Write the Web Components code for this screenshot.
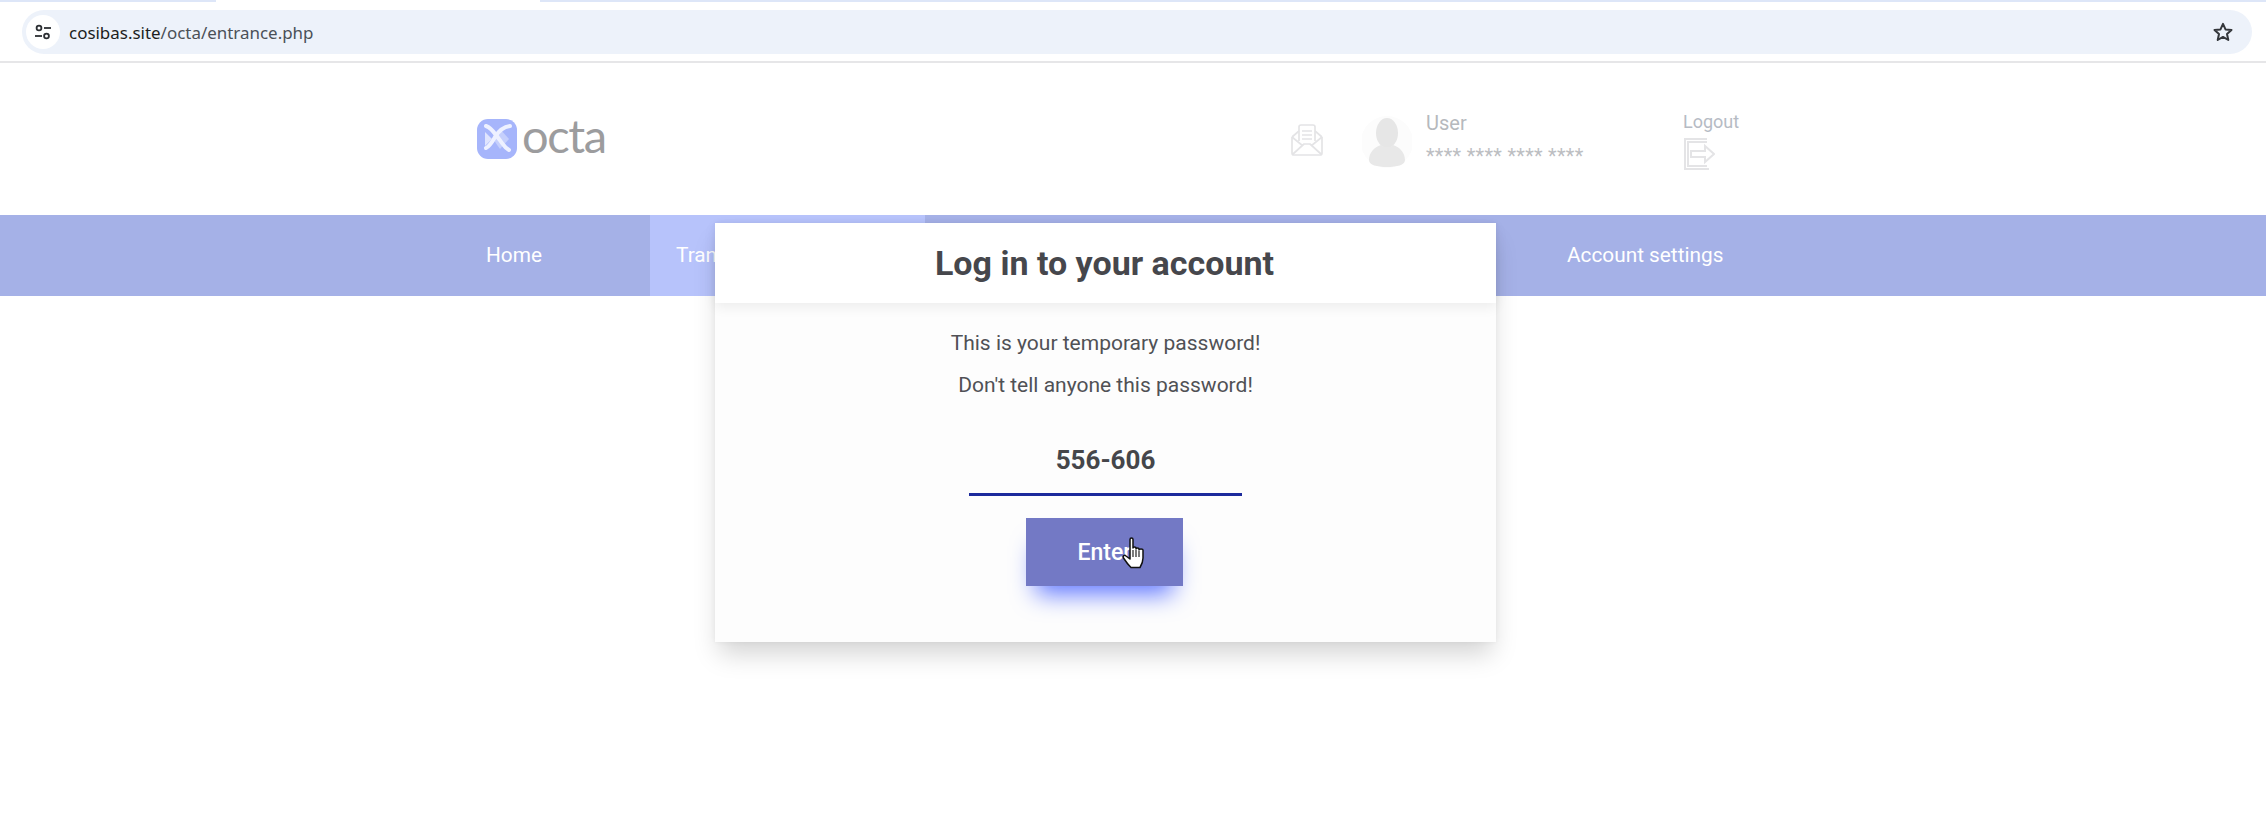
<!DOCTYPE html>
<html>
<head>
<meta charset="utf-8">
<title>octa</title>
<style>
  html, body { margin: 0; padding: 0; background: #fff; }
  body { width: 2266px; height: 838px; overflow: hidden; position: relative; font-family: Roboto, "Liberation Sans", sans-serif; }
</style>
</head>
<body>
<browser-bar url-host="cosibas.site" url-path="/octa/entrance.php"></browser-bar>
<site-header></site-header>
<site-nav></site-nav>
<login-modal code="556-606"></login-modal>
<script>
class BrowserBar extends HTMLElement {
  constructor() {
    super();
    this.attachShadow({ mode: 'open' });
  }
  connectedCallback() {
    this.shadowRoot.innerHTML = `
    <style>
      :host { display: block; height: 63px; box-sizing: border-box; border-bottom: 2px solid #e6e6e8; background: #fff; }
      .tabs { display: flex; height: 2px; }
      .tabs i { display: block; height: 2px; background: #dde6f8; }
      .tabs .a { width: 216px; }
      .tabs .b { width: 324px; background: #fff; }
      .tabs .c { flex: 1; }
      .row { padding: 8px 14px 0 22px; }
      .bar { height: 44px; border-radius: 22px; background: #edf2fa; display: flex; align-items: center; padding: 0 18px 0 3px; }
      .tune { width: 34px; height: 34px; border-radius: 50%; background: #fff; display: flex; align-items: center; justify-content: center; margin-left: 1px; }
      .url { margin-left: 9px; font: 16.950px "Noto Sans", "Open Sans", sans-serif; color: #4a5057; }
      .url b { font-weight: 400; color: #1c1e21; }
      .star { margin-left: auto; display: block; }
    </style>
    <div class="tabs"><i class="a"></i><i class="b"></i><i class="c"></i></div>
    <div class="row">
      <div class="bar">
        <div class="tune">
          <svg width="20" height="20" viewBox="0 0 20 20" fill="none" stroke="#2c2f33" stroke-width="1.8">
            <circle cx="6" cy="6" r="2.4"/><path d="M11 6h7"/>
            <circle cx="13.5" cy="14" r="2.4"/><path d="M2 14h7"/>
          </svg>
        </div>
        <span class="url"><b>${this.getAttribute('url-host')}</b>${this.getAttribute('url-path')}</span>
        <svg class="star" width="22" height="22" viewBox="0 0 22 22" fill="none" stroke="#34373b" stroke-width="2" stroke-linejoin="round">
          <path d="M11 2.8l2.5 5.6 6 .6-4.5 4 1.3 6L11 15.9 5.700 19l1.300-6-4.500-4 6-.6z"/>
        </svg>
      </div>
    </div>`;
  }
}
customElements.define('browser-bar', BrowserBar);

class SiteHeader extends HTMLElement {
  constructor() {
    super();
    this.attachShadow({ mode: 'open' });
    this.shadowRoot.innerHTML = `
    <style>
      :host { display: flex; height: 152px; align-items: center; box-sizing: border-box; padding-left: 477px; color: #b4b6b9; font-family: Roboto, "Liberation Sans", sans-serif; }
      .logo { display: flex; align-items: center; gap: 5px; width: 813px; }
      .word { font: 400 47px/40px Lato, "Noto Sans", sans-serif; letter-spacing: -1.4px; color: #9c9c9e; margin-top: -8px; }
      .mail { width: 34px; height: 34px; display: block; margin-right: 38px; margin-top: 2px; }
      .avatar { width: 50px; height: 56px; display: block; margin-right: 14px; margin-top: 4px; }
      .user { width: 257px; }
      .name { font-size: 20px; line-height: 24px; color: #b6b9bd; }
      .mask { font-size: 19.900px; line-height: 20px; margin-top: 12px; color: #bcbec2; letter-spacing: .3px; }
      .out-label { font-size: 18px; line-height: 22px; color: #b6bbc4; }
      .out svg { display: block; margin-top: 4px; }
      .out { margin-top: 4px; }
    </style>
    <div class="logo">
      <svg width="40" height="40" viewBox="0 0 40 40">
        <rect x="0" y="0" width="40" height="40" rx="11" fill="#a6b5fb"/>
        <path d="M23 10l9 10-9 10-7-10z" fill="#c5cffc"/>
        <path d="M8 13l7 7-7 7z" fill="#dfe4fe"/>
        <path d="M9 7c6 2 9 8 13 13s5 8 10 11" fill="none" stroke="#eef1ff" stroke-width="4" stroke-linecap="round"/>
        <path d="M33 7c-7 1-12 6-15 11s-5 9-9 11" fill="none" stroke="#eef1ff" stroke-width="4" stroke-linecap="round"/>
      </svg>
      <span class="word">octa</span>
    </div>
    <svg class="mail" viewBox="0 0 34 34" fill="none" stroke="#e4e4e6" stroke-width="1.700" stroke-linejoin="round">
      <path d="M2 14l7-6M32 14l-7-6M2 14v16a2 2 0 0 0 2 2h26a2 2 0 0 0 2-2V14"/>
      <path d="M9 18V4a2 2 0 0 1 2-2h12a2 2 0 0 1 2 2v14"/>
      <path d="M2 14l11 9M32 14l-11 9M3 31l11-10h6l11 10"/>
      <path d="M12 8h10M12 12h10M12 16h10"/>
    </svg>
    <svg class="avatar" viewBox="0 0 50 56">
      <circle cx="25" cy="29" r="26" fill="#fcfcfc"/>
      <ellipse cx="25" cy="20" rx="11" ry="15" fill="#e6e6e6"/>
      <path d="M19 32c-7 2-12 8-12 15 0 5 8 7 18 7s18-2 18-7c0-7-5-13-12-15-3 3-9 3-12 0z" fill="#e8e8e8"/>
    </svg>
    <div class="user">
      <div class="name">User</div>
      <div class="mask">**** **** **** ****</div>
    </div>
    <div class="out">
      <div class="out-label">Logout</div>
      <svg width="32" height="34" viewBox="0 0 32 34" fill="none" stroke="#e4e4e6" stroke-width="2">
        <path d="M24 2H2v30h24M24 5H5v24h19"/>
        <path d="M8 14h14V9l9 8-9 8v-5H8z"/>
      </svg>
    </div>`;
  }
}
customElements.define('site-header', SiteHeader);

class SiteNav extends HTMLElement {
  constructor() {
    super();
    this.attachShadow({ mode: 'open' });
    this.shadowRoot.innerHTML = `
    <style>
      :host { display: flex; height: 81px; background: #a5b1e7; padding-left: 650px; position: relative; font: 400 20.800px Roboto, "Liberation Sans", sans-serif; color: #fff; }
      a { display: flex; align-items: center; color: inherit; text-decoration: none; white-space: nowrap; padding-bottom: 2px; }
      .home { position: absolute; left: 486px; top: 0; bottom: 0; }
      .active { width: 275px; background: #b7c3fb; padding-left: 26px; box-sizing: border-box; }
      .settings { margin-left: 642px; }
    </style>
    <a class="home" href="#">Home</a>
    <a class="active" href="#">Transfers</a>
    <a class="settings" href="#">Account settings</a>`;
  }
}
customElements.define('site-nav', SiteNav);

class LoginModal extends HTMLElement {
  constructor() {
    super();
    this.attachShadow({ mode: 'open' });
  }
  connectedCallback() {
    this.shadowRoot.innerHTML = `
    <style>
      :host { display: block; position: absolute; left: 715px; top: 223px; width: 781px; height: 419px; background: #fdfdfd; box-shadow: 0 16px 24px -4px rgba(0,0,0,.17), 0 0 5px rgba(0,0,0,.05); font-family: Roboto, "Liberation Sans", sans-serif; color: #424347; text-align: center; }
      h2 { margin: 0; height: 80px; padding-right: 2px; box-sizing: border-box; background: #fff; box-shadow: 0 4px 12px rgba(0,0,0,.07); font: 700 34px/80px Roboto, "Liberation Sans", sans-serif; color: #46474c; position: relative; }
      p { margin: 0; font-size: 21px; line-height: 42px; color: #505155; }
      .msg { padding-top: 19px; }
      .code { width: 273px; height: 76px; margin: 14px auto 0; box-sizing: border-box; border-bottom: 3px solid #1c2a9c; font: 700 26px/68px Roboto, "Liberation Sans", sans-serif; color: #45464a; padding-top: 6px; }
      button { display: block; width: 157px; height: 68px; margin: 22px 0 0 311px; padding: 0; border: 0; background: #7379c5; color: #fff; font: 500 23px Roboto, "Liberation Sans", sans-serif; box-shadow: 0 18px 24px -10px #5f76ff; position: relative; }
      svg { position: absolute; left: 407px; top: 314px; }
    </style>
    <h2>Log in to your account</h2>
    <div class="msg">
      <p>This is your temporary password!</p>
      <p>Don't tell anyone this password!</p>
    </div>
    <div class="code">${this.getAttribute('code')}</div>
    <button type="button">Enter</button>
    <svg width="23" height="32" viewBox="0 0 23 32">
      <path d="M8 2.500c0-2 3-2 3 0V11c0-1.500 3-1.500 3 0v1c0-1.500 3-1.500 3 0v1c0-1.500 4-1.500 4 0v8c0 4-1.500 7-3 9.500H9c-2-2-4-4-7.500-9.500-1-2 1-3.500 2.500-2L8 22z" fill="#fff" stroke="#111" stroke-width="1.500" stroke-linejoin="round"/>
      <path d="M11 13v7M14 13v7M17 14v6" stroke="#111" stroke-width="1.100" fill="none"/>
    </svg>`;
  }
}
customElements.define('login-modal', LoginModal);
</script>
</body>
</html>
